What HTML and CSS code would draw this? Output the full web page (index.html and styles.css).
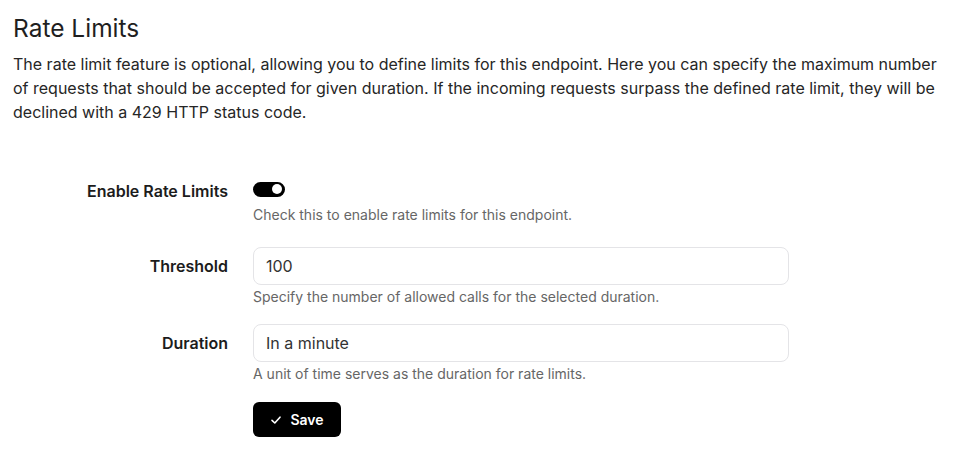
FILE: index.html
```html
<!DOCTYPE html>
<html lang="en">
<head>
<meta charset="utf-8">
<title>Rate Limits</title>
<link rel="stylesheet" href="styles.css">
</head>
<body>
<main class="page">
  <h1 class="title">Rate Limits</h1>
  <p class="intro">The rate limit feature is optional, allowing you to define limits for this endpoint. Here you can specify the maximum number of requests that should be accepted for given duration. If the incoming requests surpass the defined rate limit, they will be declined with a 429 HTTP status code.</p>

  <form class="form">
    <div class="row row-toggle">
      <label class="label">Enable Rate Limits</label>
      <div class="field">
        <div class="control control-toggle">
          <span class="toggle"><span class="knob"></span></span>
        </div>
        <div class="help">Check this to enable rate limits for this endpoint.</div>
      </div>
    </div>
    <div class="row">
      <label class="label">Threshold</label>
      <div class="field">
        <div class="control"><div class="input">100</div></div>
        <div class="help">Specify the number of allowed calls for the selected duration.</div>
      </div>
    </div>
    <div class="row">
      <label class="label">Duration</label>
      <div class="field">
        <div class="control"><div class="input">In a minute</div></div>
        <div class="help">A unit of time serves as the duration for rate limits.</div>
      </div>
    </div>
    <div class="row row-actions">
      <span class="label"></span>
      <div class="field">
        <button type="button" class="btn">
          <svg class="check" width="12" height="12" viewBox="0 0 12 12" fill="none"><path d="M2 6.3 L4.8 9 L10 3.2" stroke="#fff" stroke-width="1.6" stroke-linecap="round" stroke-linejoin="round"/></svg>
          <span>Save</span>
        </button>
      </div>
    </div>
  </form>
</main>
</body>
</html>
```
FILE: styles.css
```css
* { box-sizing: border-box; }
html, body { margin: 0; padding: 0; background: #fff; }
body {
  font-family: Inter, "Noto Sans", sans-serif;
  color: #222;
}
.page {
  padding: 12px 13px 0 13px;
}
.title {
  margin: 0;
  font-size: 24.5px;
  line-height: 32px;
  font-weight: 400;
  color: #1f1f1f;
}
.intro {
  margin: 8px 0 0 0;
  font-size: 16px;
  line-height: 24px;
  color: #262626;
  width: 930px;
}
.form {
  margin-top: 54px;
  display: flex;
  flex-direction: column;
  gap: 17px;
}
.row {
  display: grid;
  grid-template-columns: 215px 536px;
  column-gap: 25px;
  align-items: start;
}
.label {
  text-align: right;
  font-size: 16px;
  font-weight: 600;
  color: #1c1c1c;
  line-height: 38px;
}
.row-toggle .label { line-height: 27px; }
.control-toggle {
  height: 22px;
  display: flex;
  align-items: center;
}
.toggle {
  width: 32px;
  height: 15px;
  border-radius: 8px;
  background: #000;
  position: relative;
  display: inline-block;
}
.knob {
  position: absolute;
  right: 3px;
  top: 2.5px;
  width: 10px;
  height: 10px;
  border-radius: 50%;
  background: #fff;
}
.input {
  height: 38px;
  border: 1px solid #e4e4e7;
  border-radius: 8px;
  padding: 0 12px;
  font-size: 16px;
  line-height: 36px;
  color: #333;
}
.help {
  margin-top: 2px;
  font-size: 14px;
  line-height: 20px;
  color: #666;
}
.row-toggle .help { margin-top: 5px; margin-bottom: 5px; }
.row-actions { margin-top: 1px; }
.btn {
  display: inline-flex;
  align-items: center;
  gap: 8px;
  height: 35px;
  width: 88px;
  justify-content: center;
  background: #000;
  color: #fff;
  border: 0;
  border-radius: 6px;
  font-family: Inter, sans-serif;
  font-size: 14px;
  font-weight: 600;
  padding: 0;
}
.check { display: block; }
```
